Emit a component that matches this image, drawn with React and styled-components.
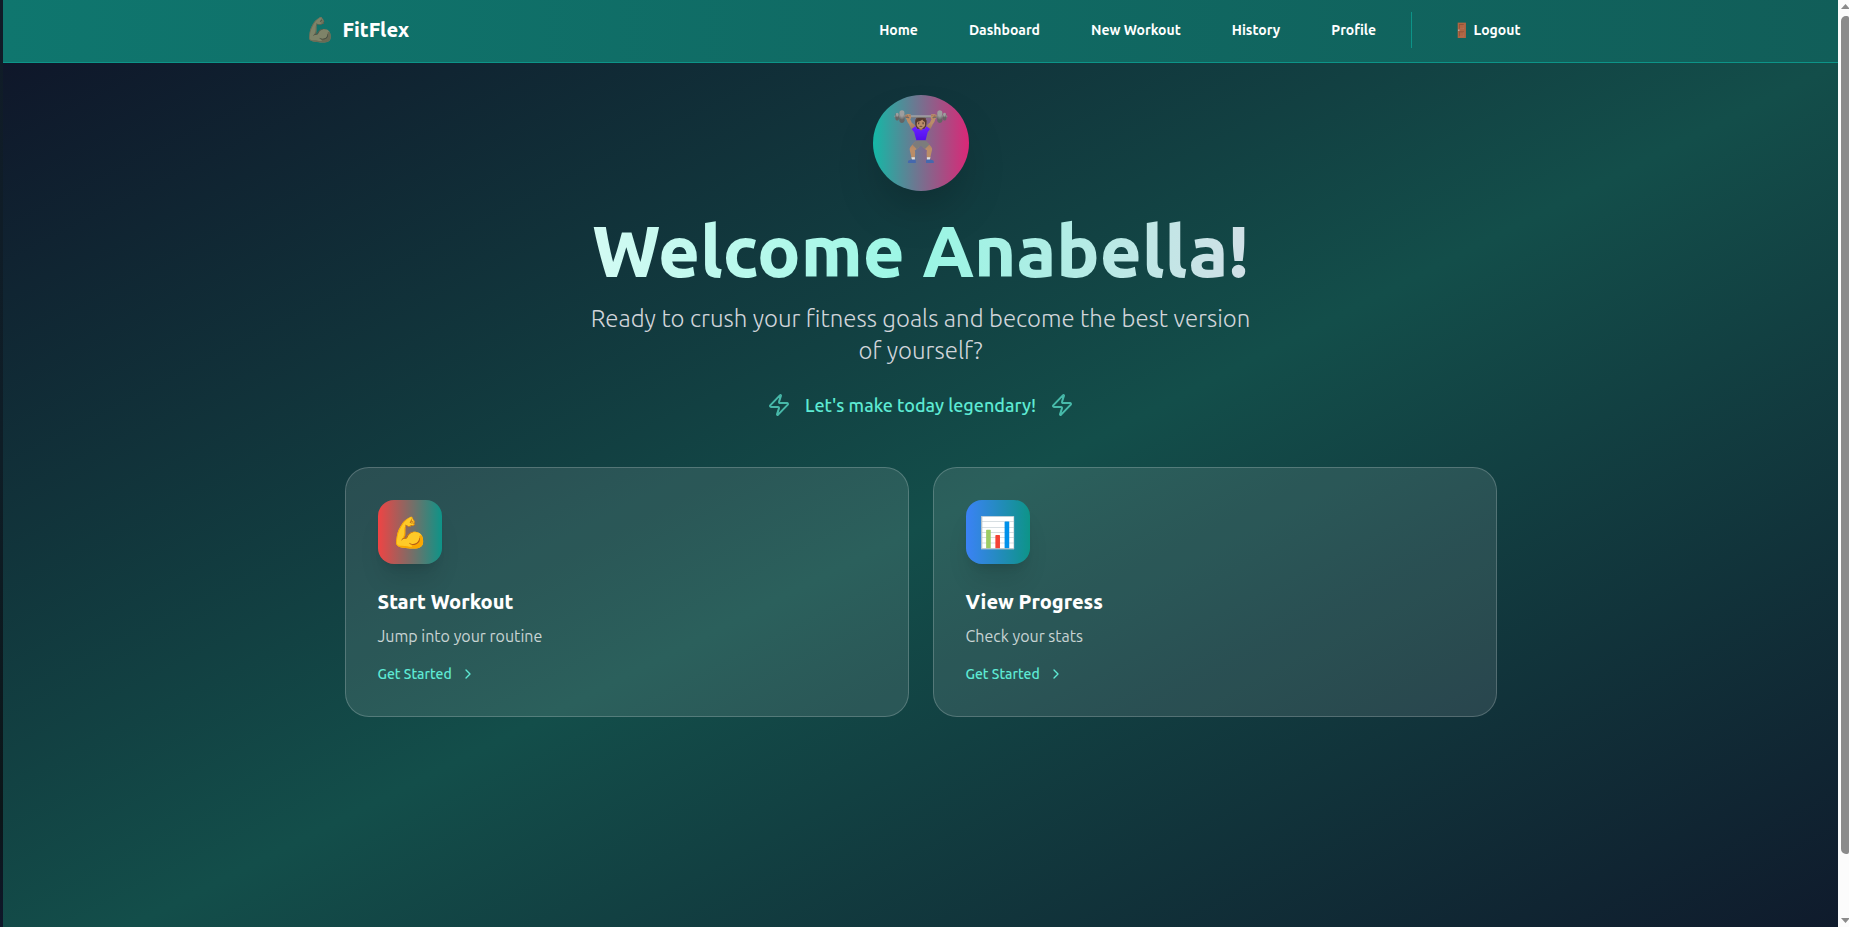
import React from 'react';
import styled, { createGlobalStyle } from 'styled-components';
import { ChevronRight, Zap } from 'lucide-react';

const GlobalStyle = createGlobalStyle`
  *, *::before, *::after { box-sizing: border-box; }
  body {
    margin: 0;
    font-family: Ubuntu, "Noto Sans", "Liberation Sans", sans-serif;
    font-size: 16px;
    line-height: 24px;
    color: #ffffff;
    background: #0f172a;
  }
  h1, h2, p { margin: 0; }
  a { color: inherit; text-decoration: none; }
`;

const Shell = styled.div`
  display: grid;
  grid-template-columns: 3px minmax(0, 1fr) 11px;
  height: 100vh;
  overflow: hidden;
`;

const Edge = styled.div`
  background: linear-gradient(to bottom, #101c28, #0e1d26 50%, #0b1518 88%, #0f172a);
`;

const Page = styled.div`
  overflow: hidden;
`;

const NavBar = styled.nav`
  padding-bottom: 2px;
  border-bottom: 1px solid #0d9488;
  background: linear-gradient(to right, #0f766e, #115e59);
`;

const NavInner = styled.div`
  display: flex;
  align-items: center;
  justify-content: space-between;
  max-width: 1280px;
  height: 60px;
  margin: 0 auto;
  padding: 0 24px;
`;

const Brand = styled.a`
  display: flex;
  align-items: center;
  gap: 8px;
  font-size: 20px;
  line-height: 28px;
  font-weight: 800;
`;

const BrandMark = styled.span`
  font-size: 24px;
  line-height: 32px;
  opacity: 0.65;
`;

const NavLinks = styled.div`
  display: flex;
  align-items: center;
  gap: 19px;
  font-size: 14px;
  line-height: 20px;
  font-weight: 600;
`;

const NavLink = styled.a`
  padding: 8px 16px;
`;

const LogoutWrap = styled.div`
  display: flex;
  padding-left: 25px;
  border-left: 1px solid #0d9488;
`;

const LogoutButton = styled.button`
  padding: 8px 16px;
  border: 0;
  background: transparent;
  color: inherit;
  font: inherit;
  cursor: pointer;
`;

const Main = styled.main`
  min-height: 100vh;
  padding: 32px 24px;
  background: linear-gradient(to bottom right, #0f172a, #134e4a, #0f172a);
`;

const Content = styled.div`
  max-width: 1152px;
  margin: 0 auto;
`;

const Hero = styled.header`
  display: flex;
  flex-direction: column;
  align-items: center;
  margin-bottom: 48px;
  text-align: center;
`;

const Avatar = styled.div`
  display: flex;
  justify-content: center;
  width: 96px;
  height: 96px;
  margin-bottom: 24px;
  padding-top: 16px;
  border-radius: 50%;
  background: linear-gradient(to right, #14b8a6, #db2777);
  box-shadow: 0 24px 48px -12px rgba(0, 0, 0, 0.25);
  font-size: 48px;
  line-height: 48px;
`;

const Title = styled.h1`
  width: 100%;
  margin-bottom: 16px;
  background: linear-gradient(to right, #ffffff, #99f6e4, #fbcfe8);
  background-clip: text;
  color: transparent;
  font-size: 72px;
  line-height: 72px;
  font-weight: 800;
`;

const Subtitle = styled.p`
  max-width: 672px;
  margin-bottom: 24px;
  color: #d1d5db;
  font-size: 24px;
  line-height: 32px;
  font-weight: 300;
`;

const Motto = styled.div`
  display: flex;
  align-items: center;
  gap: 14px;
  color: #5eead4;
  font-size: 18px;
  line-height: 28px;
  font-weight: 500;

  svg { opacity: 0.7; }
`;

const Cards = styled.section`
  display: grid;
  grid-template-columns: repeat(2, minmax(0, 1fr));
  gap: 24px;
`;

const Card = styled.a`
  display: block;
  padding: 32px;
  border: 1px solid rgba(255, 255, 255, 0.2);
  border-radius: 24px;
  background: rgba(255, 255, 255, 0.1);
`;

const CardIcon = styled.div`
  display: flex;
  align-items: center;
  justify-content: center;
  width: 64px;
  height: 64px;
  margin-bottom: 24px;
  border-radius: 16px;
  background: linear-gradient(to right, ${(p) => p.$from}, #0d9488);
  box-shadow: 0 20px 25px -5px rgba(0, 0, 0, 0.1), 0 8px 10px -6px rgba(0, 0, 0, 0.1);
  font-size: 30px;
  line-height: 36px;
`;

const CardTitle = styled.h2`
  margin-bottom: 8px;
  font-size: 20px;
  line-height: 28px;
  font-weight: 800;
`;

const CardText = styled.p`
  margin-bottom: 16px;
  color: rgba(255, 255, 255, 0.75);
`;

const CardAction = styled.span`
  display: flex;
  align-items: center;
  gap: 8px;
  color: #5eead4;
  font-size: 14px;
  line-height: 20px;
  font-weight: 500;
`;

const ScrollTrack = styled.div`
  display: flex;
  flex-direction: column;
  align-items: flex-end;
  gap: 4px;
  padding: 4px 0;
  background: #fcfcfc;
`;

const ScrollArrow = styled.svg`
  flex: none;
  display: block;
  width: 8px;
  height: 5px;
  fill: #8b8b8b;
`;

const ScrollRail = styled.div`
  flex: 1;
  width: 8px;
  padding-top: 3px;
`;

const ScrollThumb = styled.div`
  height: 93.3%;
  border-radius: 5px 2px 2px 5px;
  background: #8b8b8b;
`;

const links = ['Home', 'Dashboard', 'New Workout', 'History', 'Profile'];

const cards = [
  { icon: '💪', from: '#ef4444', title: 'Start Workout', text: 'Jump into your routine' },
  { icon: '📊', from: '#3b82f6', title: 'View Progress', text: 'Check your stats' },
];

export default function App() {
  return (
    <>
      <GlobalStyle />
      <Shell>
        <Edge />
        <Page>
          <NavBar>
            <NavInner>
              <Brand href="#">
                <BrandMark>💪🏽</BrandMark>
                FitFlex
              </Brand>
              <NavLinks>
                {links.map((label) => (
                  <NavLink key={label} href="#">{label}</NavLink>
                ))}
                <LogoutWrap>
                  <LogoutButton type="button">🚪 Logout</LogoutButton>
                </LogoutWrap>
              </NavLinks>
            </NavInner>
          </NavBar>
          <Main>
            <Content>
              <Hero>
                <Avatar>🏋🏽‍♀️</Avatar>
                <Title>Welcome Anabella!</Title>
                <Subtitle>
                  Ready to crush your fitness goals and become the best version of yourself?
                </Subtitle>
                <Motto>
                  <Zap size={24} />
                  <span>Let's make today legendary!</span>
                  <Zap size={24} />
                </Motto>
              </Hero>
              <Cards>
                {cards.map((card) => (
                  <Card key={card.title} href="#">
                    <CardIcon $from={card.from}>{card.icon}</CardIcon>
                    <CardTitle>{card.title}</CardTitle>
                    <CardText>{card.text}</CardText>
                    <CardAction>
                      Get Started
                      <ChevronRight size={16} />
                    </CardAction>
                  </Card>
                ))}
              </Cards>
            </Content>
          </Main>
        </Page>
        <ScrollTrack>
          <ScrollArrow viewBox="0 0 8 5"><path d="M0 5 4.500 0 8 4v1z" /></ScrollArrow>
          <ScrollRail><ScrollThumb /></ScrollRail>
          <ScrollArrow viewBox="0 0 8 5"><path d="M0 0h8v1L4.500 5z" /></ScrollArrow>
        </ScrollTrack>
      </Shell>
    </>
  );
}
